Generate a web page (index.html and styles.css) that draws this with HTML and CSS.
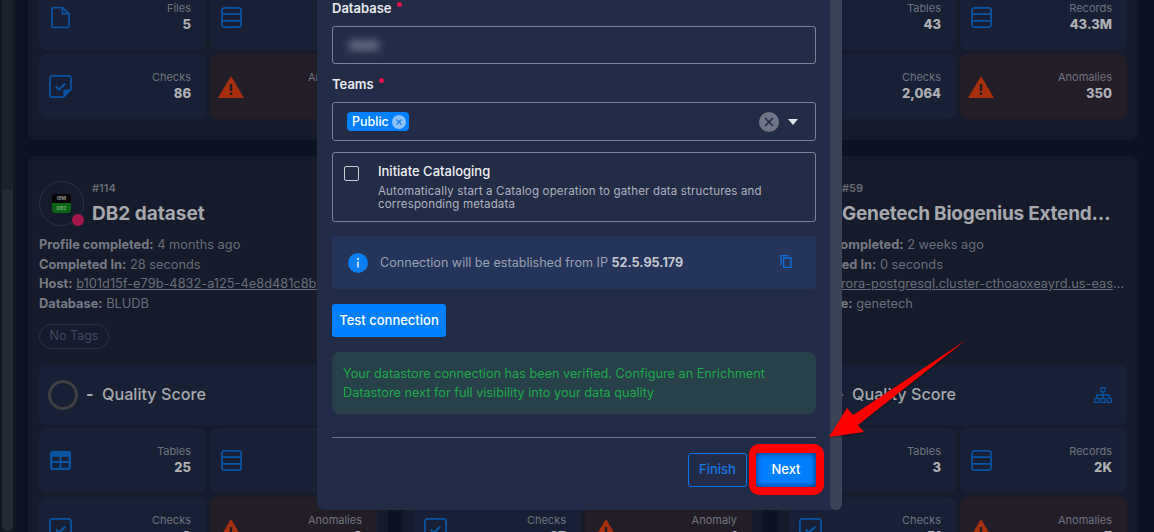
FILE: index.html
```html
<!DOCTYPE html>
<html lang="en">
<head>
    <meta charset="UTF-8">
    <title>Add Datastore</title>
    <link rel="stylesheet" href="styles.css">
</head>
<body>
<svg class="defs" width="0" height="0">
    <symbol id="i-file" viewBox="0 0 20 24"><path d="M2 1.500h10l7 6.500V21a1.500 1.500 0 0 1-1.500 1.500h-15A1.500 1.500 0 0 1 1 21V3a1.500 1.500 0 0 1 1-1.500zM12 1.500V8h7" fill="none" stroke="currentColor" stroke-width="1.800"/></symbol>
    <symbol id="i-rows" viewBox="0 0 22 22"><rect x="1" y="1" width="20" height="20" rx="2.500" fill="none" stroke="currentColor" stroke-width="1.800"/><path d="M1 7.500h20M1 14.500h20" stroke="currentColor" stroke-width="1.800"/></symbol>
    <symbol id="i-table" viewBox="0 0 22 20"><path fill-rule="evenodd" fill="currentColor" d="M2 0h18a2 2 0 0 1 2 2v16a2 2 0 0 1-2 2H2a2 2 0 0 1-2-2V2a2 2 0 0 1 2-2zM2.500 6v4.500h7.500V6zM12 6v4.500h7.500V6zM2.500 12.500V17.500h7.500v-5zM12 12.500v5h7.500v-5z"/></symbol>
    <symbol id="i-check" viewBox="0 0 24 24"><path d="M3.500 1h17A2.500 2.500 0 0 1 23 3.500V15l-8 8H3.500A2.500 2.500 0 0 1 1 20.500v-17A2.500 2.500 0 0 1 3.500 1z" fill="none" stroke="currentColor" stroke-width="1.800"/><path d="M23 15h-6a2 2 0 0 0-2 2v6z" fill="currentColor"/><path d="M7 12l3.500 3.200L17 9" fill="none" stroke="currentColor" stroke-width="2.200"/></symbol>
    <symbol id="i-warn" viewBox="0 0 26 22"><path fill-rule="evenodd" fill="currentColor" d="M13 0l13 22H0zM11.800 8v7h2.400V8zM11.800 16.500V19h2.400v-2.500z"/></symbol>
    <symbol id="i-tree" viewBox="0 0 18 16"><path fill="none" stroke="currentColor" stroke-width="1.300" d="M7 .7h4v4H7zM.7 11.300h4v4h-4zM7 11.300h4v4H7zM13.300 11.300h4v4h-4zM9 4.700v6.600M2.700 11.300V8h12.600v3.300"/></symbol>
</svg>

<div class="page">
    <div class="rail"><div class="rail-thumb"></div></div>
    <div class="grid">
        <section class="card">
            <div class="tiles">
                <div class="tile"><svg class="ico ico-file"><use href="#i-file"/></svg><div class="nums"><span>Files</span><b>5</b></div></div>
                <div class="tile"><svg class="ico ico-rows"><use href="#i-rows"/></svg></div>
                <div class="tile"><svg class="ico"><use href="#i-check"/></svg><div class="nums"><span>Checks</span><b>86</b></div></div>
                <div class="tile red"><svg class="ico ico-warn"><use href="#i-warn"/></svg><div class="nums"><span>Anomalies</span></div></div>
            </div>
        </section>
        <section class="card"></section>
        <section class="card">
            <div class="tiles">
                <div class="tile"><svg class="ico ico-table"><use href="#i-table"/></svg><div class="nums"><span>Tables</span><b>43</b></div></div>
                <div class="tile"><svg class="ico ico-rows"><use href="#i-rows"/></svg><div class="nums"><span>Records</span><b>43.3M</b></div></div>
                <div class="tile"><svg class="ico"><use href="#i-check"/></svg><div class="nums"><span>Checks</span><b>2,064</b></div></div>
                <div class="tile red"><svg class="ico ico-warn"><use href="#i-warn"/></svg><div class="nums"><span>Anomalies</span><b>350</b></div></div>
            </div>
        </section>

        <section class="card card-full">
            <div class="head">
                <div class="head-top">
                    <div class="logo">
                        <div class="db2"><span>IBM</span><span class="db2-low">DB2</span></div>
                        <i class="badge"></i>
                    </div>
                    <div>
                        <div class="num">#114</div>
                        <h2 class="title">DB2 dataset</h2>
                    </div>
                </div>
                <p class="meta"><b>Profile completed:</b> 4 months ago</p>
                <p class="meta"><b>Completed In:</b> 28 seconds</p>
                <p class="meta host"><b>Host:</b> <u>b101d15f-e79b-4832-a125-4e8d481c8bf</u></p>
                <p class="meta"><b>Database:</b> BLUDB</p>
                <span class="pill">No Tags</span>
            </div>
            <div class="score"><i class="ring"></i><span class="dash">-</span><span>Quality Score</span></div>
            <div class="tiles">
                <div class="tile"><svg class="ico ico-table"><use href="#i-table"/></svg><div class="nums"><span>Tables</span><b>25</b></div></div>
                <div class="tile"><svg class="ico ico-rows"><use href="#i-rows"/></svg></div>
                <div class="tile"><svg class="ico"><use href="#i-check"/></svg><div class="nums"><span>Checks</span><b>8</b></div></div>
                <div class="tile red"><svg class="ico ico-warn"><use href="#i-warn"/></svg><div class="nums"><span>Anomalies</span><b>2</b></div></div>
            </div>
        </section>

        <section class="card card-full">
            <div class="head"></div>
            <div class="score"></div>
            <div class="tiles">
                <div class="tile"></div>
                <div class="tile"></div>
                <div class="tile"><svg class="ico"><use href="#i-check"/></svg><div class="nums"><span>Checks</span><b>37</b></div></div>
                <div class="tile red"><svg class="ico ico-warn"><use href="#i-warn"/></svg><div class="nums"><span>Anomaly</span><b>1</b></div></div>
            </div>
        </section>

        <section class="card card-full">
            <div class="head">
                <div class="head-top">
                    <div class="logo"></div>
                    <div>
                        <div class="num">#59</div>
                        <h2 class="title title-cut">Genetech Biogenius Extended</h2>
                    </div>
                </div>
                <p class="meta"><b>Profile completed:</b> 2 weeks ago</p>
                <p class="meta"><b>Completed In:</b> 0 seconds</p>
                <p class="meta host"><b>Host:</b> <u>aurora-postgresql.cluster-cthoaoxeayrd.us-east-1.rds.amazonaws.com</u></p>
                <p class="meta"><b>Database:</b> genetech</p>
            </div>
            <div class="score"><i class="ring"></i><span class="dash">-</span><span>Quality Score</span><svg class="ico-tree"><use href="#i-tree"/></svg></div>
            <div class="tiles">
                <div class="tile"><svg class="ico ico-table"><use href="#i-table"/></svg><div class="nums"><span>Tables</span><b>3</b></div></div>
                <div class="tile"><svg class="ico ico-rows"><use href="#i-rows"/></svg><div class="nums"><span>Records</span><b>2K</b></div></div>
                <div class="tile"><svg class="ico"><use href="#i-check"/></svg><div class="nums"><span>Checks</span><b>51</b></div></div>
                <div class="tile red"><svg class="ico ico-warn"><use href="#i-warn"/></svg><div class="nums"><span>Anomalies</span><b>7</b></div></div>
            </div>
        </section>
    </div>
</div>

<div class="modal">
    <div class="modal-body">
        <div class="label">Database <i class="req"></i></div>
        <div class="field"><span class="blurred"></span></div>

        <div class="label label-teams">Teams <i class="req"></i></div>
        <div class="field field-select">
            <span class="tag">Public
                <svg class="tag-x" viewBox="0 0 14 14"><circle cx="7" cy="7" r="7" fill="#8dc3fb"/><path d="M4.500 4.500l5 5M9.500 4.500l-5 5" stroke="#1f7fe6" stroke-width="1.300"/></svg>
            </span>
            <svg class="clear" viewBox="0 0 20 20"><circle cx="10" cy="10" r="10" fill="#6f7584"/><path d="M6 6l8 8M14 6l-8 8" stroke="#232c47" stroke-width="1.700"/></svg>
            <i class="caret"></i>
        </div>

        <div class="catalog">
            <i class="checkbox"></i>
            <div>
                <div class="catalog-title">Initiate Cataloging</div>
                <div class="catalog-text">Automatically start a Catalog operation to gather data structures and corresponding metadata</div>
            </div>
        </div>

        <div class="info">
            <svg class="info-ico" viewBox="0 0 20 20"><circle cx="10" cy="10" r="10" fill="#0a7ff5"/><path d="M10 8.500v6M10 5v2" stroke="#cfe4fb" stroke-width="1.800"/></svg>
            <span class="info-text">Connection will be established from IP <b>52.5.95.179</b></span>
            <svg class="copy" viewBox="0 0 12 13"><path d="M3.600 3h7.400v9.400H3.600zM1 10V.7h7.500" fill="none" stroke="#0f6fe0" stroke-width="1.300"/></svg>
        </div>

        <button class="btn-test">Test connection</button>

        <div class="success">Your datastore connection has been verified. Configure an Enrichment Datastore next for full visibility into your data quality</div>

        <div class="divider"></div>

        <div class="actions">
            <button class="btn-finish">Finish</button>
            <button class="btn-next">Next</button>
        </div>
    </div>
    <div class="modal-scroll"></div>
</div>

<svg class="arrow" viewBox="825 335 150 110"><polygon points="829,437 847,408 853,415 966,340 858,425 864,432" fill="#f00"/></svg>
</body>
</html>
```

FILE: styles.css
```css
*{
    box-sizing: border-box;
    margin: 0;
    padding: 0;
}
html,body{
    width: 1154px;
    height: 532px;
    overflow: hidden;
    background: #0c1323;
    font-family: Inter, "Liberation Sans", sans-serif;
}
button{
    font-family: inherit;
    border: none;
}
.defs{
    display: block;
    height: 0;
}

/* page behind the dialog */
.page{
    display: flex;
    align-items: flex-start;
    height: 532px;
    overflow: hidden;
}
.rail{
    flex: none;
    width: 18px;
    height: 532px;
    padding: 0 5px 1px 2px;
    background: #10161f;
}
.rail-thumb{
    height: 100%;
    border-radius: 0 0 5px 5px;
    background: linear-gradient(#1b212c 190px, #242b37 190px);
}
.grid{
    display: grid;
    grid-template-columns: repeat(3, 360px);
    grid-template-rows: 140px auto;
    gap: 16px 15px;
    margin-left: 10px;
    align-content: start;
}
.card{
    background: #151b2b;
    border-radius: 0 0 8px 8px;
    overflow: hidden;
    height: 140px;
    padding: 0 11px;
    display: flex;
    flex-direction: column;
    justify-content: flex-end;
}
.card-full{
    display: block;
    height: 420px;
    padding: 25px 11px 0;
    border-radius: 8px 8px 0 0;
}
.tiles{
    display: grid;
    grid-template-columns: 167px 167px;
    grid-auto-rows: 65px;
    gap: 4px;
}
.card .tiles:only-child{
    padding-bottom: 21px;
}
.tile{
    display: flex;
    align-items: center;
    justify-content: space-between;
    padding: 0 15px 0 10px;
    border-radius: 8px;
    background: #172034;
    color: #0a55a3;
}
.red{
    background: #231d28;
    color: #a8300f;
}
.ico{
    width: 23px;
    height: 23px;
}
.ico-file{
    width: 19px;
    margin-left: 2px;
}
.ico-rows{
    width: 21px;
    height: 21px;
    margin-left: 1px;
}
.ico-warn{
    width: 26px;
    height: 22px;
    margin-left: -2px;
}
.ico-table{
    width: 21px;
    height: 19px;
    margin-left: 1px;
}
.nums{
    display: flex;
    flex-direction: column;
    align-items: flex-end;
    min-height: 35px;
    padding-bottom: 2px;
}
.nums span{
    font-size: 11px;
    line-height: 16px;
    color: #6f7480;
}
.nums b{
    font-size: 13px;
    font-weight: 800;
    line-height: 17px;
    color: #aeb0b6;
}

/* datastore header */
.head{
    height: 167px;
}
.head-top{
    display: flex;
    gap: 8px;
    height: 53px;
    margin-bottom: 1px;
}
.logo{
    position: relative;
    flex: none;
    width: 45px;
    height: 45px;
    border: 1px solid #2b3140;
    border-radius: 50%;
    display: flex;
    align-items: center;
    justify-content: center;
}
.db2{
    display: flex;
    flex-direction: column;
    width: 19px;
    height: 19px;
    border-radius: 3px;
    overflow: hidden;
    background: #050506;
    color: #8c8f90;
    font-size: 5px;
    line-height: 9px;
    text-align: center;
    font-weight: 700;
}
.db2-low{
    background: #0b6414;
    color: #6fa874;
    line-height: 10px;
}
.badge{
    position: absolute;
    right: -1px;
    bottom: -1px;
    width: 12px;
    height: 12px;
    border-radius: 50%;
    background: #a3174b;
}
.num{
    font-size: 11px;
    font-weight: 600;
    line-height: 15px;
    color: #666b75;
}
.title{
    margin-top: 5px;
    font-size: 19px;
    line-height: 26px;
    font-weight: 700;
    color: #a6a8ae;
    white-space: nowrap;
}
.title-cut{
    width: 270px;
    letter-spacing: -.25px;
    overflow: hidden;
    text-overflow: ellipsis;
}
.meta{
    font-size: 12.800px;
    line-height: 19.700px;
    color: #696e79;
    white-space: nowrap;
}
.meta b{
    font-weight: 700;
    color: #777a84;
}
.host{
    overflow: hidden;
    text-overflow: ellipsis;
}
.pill{
    display: inline-block;
    margin-top: 10px;
    width: 70px;
    height: 25px;
    padding-bottom: 1px;
    border: 1px solid #2b3140;
    border-radius: 13px;
    font-size: 12.500px;
    line-height: 22px;
    text-align: center;
    color: #42495f;
}
.score{
    display: flex;
    align-items: center;
    height: 60px;
    margin-top: 17px;
    padding: 0 15px 0 9px;
    border-radius: 8px;
    background: #172034;
    font-size: 16.200px;
    line-height: 18px;
    font-weight: 500;
    color: #a6a9ae;
}
.score span{
    margin-bottom: 2px;
}
.ring{
    width: 30px;
    height: 30px;
    margin-right: 8px;
    border: 3px solid #3e4044;
    border-radius: 50%;
}
.dash{
    width: 16px;
    font-weight: 700;
}
.ico-tree{
    width: 18px;
    height: 16px;
    margin-left: auto;
    color: #0a55a3;
}
.score + .tiles{
    margin-top: 3px;
}

/* dialog */
.modal{
    position: absolute;
    left: 317px;
    top: 0;
    display: flex;
    width: 525px;
    height: 510px;
    background: #232c47;
    border-radius: 0 0 8px 8px;
}
.modal-body{
    width: 513px;
    padding: 0 14px 0 15px;
}
.modal-scroll{
    width: 12px;
    height: 510px;
    border-radius: 0 0 6px 6px;
    background: #3b4357;
}
.label{
    height: 16px;
    margin-bottom: 10px;
    font-size: 13px;
    font-weight: 600;
    line-height: 16px;
    color: #e8eaef;
}
.label-teams{
    margin-top: 12px;
}
.req{
    display: inline-block;
    width: 5px;
    height: 5px;
    margin-left: 2px;
    border-radius: 50%;
    background: #e8114f;
    vertical-align: 6px;
}
.field{
    display: flex;
    align-items: center;
    height: 38px;
    padding: 0 17px 0 14px;
    border: 1px solid #7b8090;
    border-radius: 3px;
}
.blurred{
    width: 30px;
    height: 9px;
    margin-left: 2px;
    background: #6d7486;
    filter: blur(4px);
}
.field-select{
    height: 39px;
}
.tag{
    display: flex;
    align-items: center;
    gap: 3px;
    height: 19px;
    padding: 0 3px 0 5px;
    border-radius: 4px;
    background: #007fff;
    color: #fff;
    font-size: 12.500px;
    font-weight: 500;
}
.tag-x{
    width: 14px;
    height: 14px;
}
.clear{
    width: 20px;
    height: 20px;
    margin-left: auto;
}
.caret{
    width: 0;
    height: 0;
    margin-left: 9px;
    border-left: 5.500px solid transparent;
    border-right: 5.500px solid transparent;
    border-top: 6px solid #dfe3ea;
}
.catalog{
    display: flex;
    height: 70px;
    margin-top: 11px;
    padding: 11px 30px 0 11px;
    border: 1px solid #7b8090;
    border-radius: 3px;
}
.checkbox{
    flex: none;
    width: 15px;
    height: 15px;
    margin: 2px 19px 0 0;
    border: 1px solid #c9ccd4;
    border-radius: 2px;
}
.catalog-title{
    font-size: 13px;
    font-weight: 500;
    line-height: 15px;
    color: #eef0f4;
}
.catalog-text{
    margin-top: 6px;
    font-size: 11.500px;
    letter-spacing: .17px;
    line-height: 13px;
    color: #aeb3c0;
}
.info{
    display: flex;
    align-items: center;
    height: 53px;
    margin-top: 14px;
    padding: 0 24px 0 16px;
    border-radius: 4px;
    background: #25355a;
    font-size: 12.600px;
    color: #9aa1b0;
}
.info b{
    font-weight: 700;
    color: #c3c7d0;
}
.info-ico{
    width: 20px;
    height: 20px;
    margin-right: 12px;
}
.copy{
    width: 12px;
    height: 13px;
    margin-left: auto;
    margin-top: -3px;
}
.btn-test{
    display: block;
    width: 114px;
    height: 33px;
    margin-top: 15px;
    padding-bottom: 2px;
    border-radius: 3px;
    background: #007fff;
    color: #fff;
    font-size: 13px;
    font-weight: 500;
}
.success{
    height: 62px;
    margin-top: 15px;
    padding: 12px 11px 0;
    border-radius: 8px;
    background: #27404a;
    color: #21a94b;
    font-size: 12.700px;
    line-height: 19px;
}
.divider{
    height: 1px;
    margin-top: 23px;
    background: #6d7384;
}
.actions{
    display: flex;
    justify-content: flex-end;
    gap: 9px;
    margin-top: 15px;
}
.btn-finish{
    width: 59px;
    height: 34px;
    padding-bottom: 2px;
    border: 1px solid #0a75e8;
    border-radius: 3px;
    background: transparent;
    color: #1a78e6;
    font-size: 13px;
    font-weight: 500;
}
.btn-next{
    position: relative;
    width: 60px;
    height: 34px;
    padding-bottom: 2px;
    background: #007fff;
    box-shadow: inset 0 0 6px #06265c;
    color: #fff;
    font-size: 13px;
    font-weight: 500;
}
.btn-next::after{
    content: "";
    position: absolute;
    top: -9px;
    right: -8px;
    bottom: -8px;
    left: -7px;
    border: solid #f00;
    border-width: 9px 8px 8px 7px;
    border-radius: 10px;
}

/* annotation arrow */
.arrow{
    position: absolute;
    left: 825px;
    top: 335px;
    width: 150px;
    height: 110px;
    filter: drop-shadow(0 1px 1px rgba(0,0,0,.4));
}
```
